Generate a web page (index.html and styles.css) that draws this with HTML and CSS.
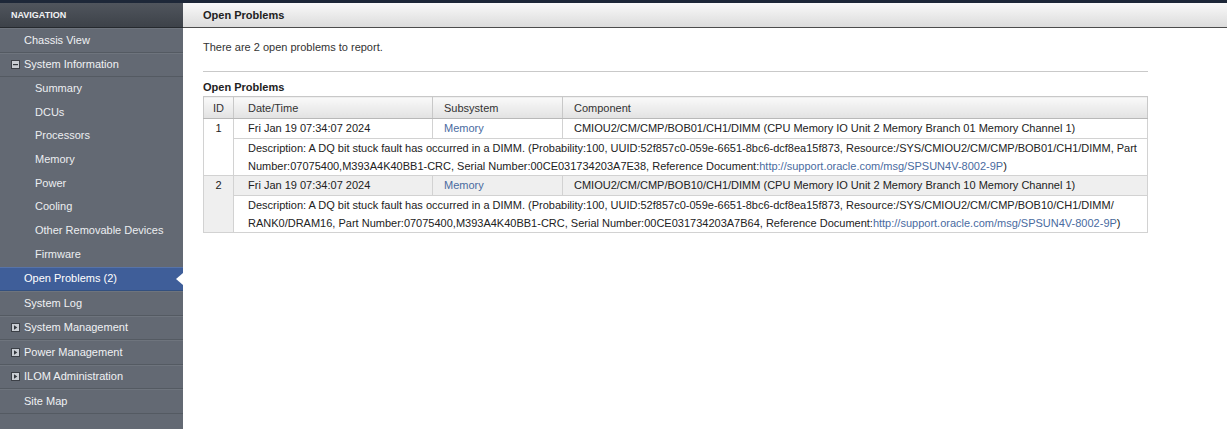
FILE: index.html
```html
<!DOCTYPE html>
<html>
<head>
<meta charset="utf-8">
<title>Open Problems</title>
<link rel="stylesheet" href="styles.css">
</head>
<body>
<div class="top-strip"></div>
<div class="layout">
  <nav class="sidebar">
    <div class="nav-header">NAVIGATION</div>
    <ul class="nav">
      <li class="nav-top"><span class="label">Chassis View</span></li>
      <li class="nav-top">
        <svg class="tog" width="9" height="9" viewBox="0 0 9 9"><rect x="0.5" y="0.5" width="8" height="8" fill="#c9cdd3" stroke="#3c4047"/><rect x="2" y="4" width="5" height="1.2" fill="#33373d"/></svg>
        <span class="label">System Information</span>
      </li>
      <li class="nav-sub">Summary</li>
      <li class="nav-sub">DCUs</li>
      <li class="nav-sub">Processors</li>
      <li class="nav-sub">Memory</li>
      <li class="nav-sub">Power</li>
      <li class="nav-sub">Cooling</li>
      <li class="nav-sub">Other Removable Devices</li>
      <li class="nav-sub">Firmware</li>
      <li class="nav-top selected"><span class="label">Open Problems (2)</span><span class="pointer"></span></li>
      <li class="nav-top"><span class="label">System Log</span></li>
      <li class="nav-top">
        <svg class="tog" width="9" height="9" viewBox="0 0 9 9"><rect x="0.5" y="0.5" width="8" height="8" fill="#c9cdd3" stroke="#3c4047"/><path d="M3 2.2 L6.3 4.5 L3 6.8 Z" fill="#33373d"/></svg>
        <span class="label">System Management</span>
      </li>
      <li class="nav-top">
        <svg class="tog" width="9" height="9" viewBox="0 0 9 9"><rect x="0.5" y="0.5" width="8" height="8" fill="#c9cdd3" stroke="#3c4047"/><path d="M3 2.2 L6.3 4.5 L3 6.8 Z" fill="#33373d"/></svg>
        <span class="label">Power Management</span>
      </li>
      <li class="nav-top">
        <svg class="tog" width="9" height="9" viewBox="0 0 9 9"><rect x="0.5" y="0.5" width="8" height="8" fill="#c9cdd3" stroke="#3c4047"/><path d="M3 2.2 L6.3 4.5 L3 6.8 Z" fill="#33373d"/></svg>
        <span class="label">ILOM Administration</span>
      </li>
      <li class="nav-top"><span class="label">Site Map</span></li>
    </ul>
  </nav>
  <main class="main">
    <div class="page-header">Open Problems</div>
    <div class="content">
      <p class="intro">There are 2 open problems to report.</p>
      <hr class="rule">
      <h2 class="section-title">Open Problems</h2>
      <table class="problems">
        <colgroup>
          <col class="c-id"><col class="c-date"><col class="c-sub"><col class="c-comp">
        </colgroup>
        <thead>
          <tr><th class="id">ID</th><th class="first">Date/Time</th><th>Subsystem</th><th>Component</th></tr>
        </thead>
        <tbody>
          <tr class="data odd">
            <td class="id" rowspan="2">1</td>
            <td class="first">Fri Jan 19 07:34:07 2024</td>
            <td><a class="link">Memory</a></td>
            <td>CMIOU2/CM/CMP/BOB01/CH1/DIMM (CPU Memory IO Unit 2 Memory Branch 01 Memory Channel 1)</td>
          </tr>
          <tr class="desc">
            <td colspan="3">Description: A DQ bit stuck fault has occurred in a DIMM. (Probability:100, UUID:52f857c0-059e-6651-8bc6-dcf8ea15f873, Resource:/SYS/CMIOU2/CM/CMP/BOB01/CH1/DIMM, Part Number:07075400,M393A4K40BB1-CRC, Serial Number:00CE031734203A7E38, Reference Document:<a class="link">http://support.oracle.com/msg/SPSUN4V-8002-9P</a>)</td>
          </tr>
          <tr class="data even">
            <td class="id" rowspan="2">2</td>
            <td class="first">Fri Jan 19 07:34:07 2024</td>
            <td><a class="link">Memory</a></td>
            <td>CMIOU2/CM/CMP/BOB10/CH1/DIMM (CPU Memory IO Unit 2 Memory Branch 10 Memory Channel 1)</td>
          </tr>
          <tr class="desc">
            <td colspan="3">Description: A DQ bit stuck fault has occurred in a DIMM. (Probability:100, UUID:52f857c0-059e-6651-8bc6-dcf8ea15f873, Resource:/SYS/CMIOU2/CM/CMP/BOB10/CH1/DIMM/<wbr>RANK0/DRAM16, Part Number:07075400,M393A4K40BB1-CRC, Serial Number:00CE031734203A7B64, Reference Document:<a class="link">http://support.oracle.com/msg/SPSUN4V-8002-9P</a>)</td>
          </tr>
        </tbody>
      </table>
    </div>
  </main>
</div>
</body>
</html>
```

FILE: styles.css
```css
html, body {
  margin: 0;
  padding: 0;
  height: 100%;
}
body {
  font-family: "Liberation Sans", Arial, sans-serif;
  font-size: 11px;
  color: #333;
  background: #fff;
  display: flex;
  flex-direction: column;
  overflow: hidden;
}
.top-strip {
  height: 3px;
  background: #1d2738;
  flex: none;
}
.layout {
  flex: 1;
  display: flex;
  min-height: 0;
}
.sidebar {
  width: 183px;
  flex: none;
  background: #636973;
  display: flex;
  flex-direction: column;
}
.nav-header {
  height: 24px;
  line-height: 24px;
  padding-left: 11px;
  font-size: 9px;
  font-weight: bold;
  color: #f2f3f5;
  background: linear-gradient(#50555d, #3d4249);
  border-bottom: 1px solid #25292e;
}
.nav {
  list-style: none;
  margin: 0;
  padding: 0;
}
.nav-top {
  height: 23.5px;
  display: flex;
  align-items: center;
  position: relative;
  color: #f0f1f3;
  border-bottom: 1px solid #545a62;
  box-shadow: inset 0 1px 0 #6e747d;
  padding-left: 24px;
}
.nav-top .tog {
  position: absolute;
  left: 11px;
  top: 7.5px;
}
.nav-sub {
  height: 23.7px;
  line-height: 23.7px;
  padding-left: 35px;
  color: #eceef1;
  background: #636973;
}
.nav-top.selected {
  background: #3f5e99;
  color: #fff;
  border-bottom: 1px solid #33507f;
  box-shadow: inset 0 1px 0 #5773a8;
}
.pointer {
  position: absolute;
  right: 0;
  top: 6px;
  width: 0;
  height: 0;
  border-top: 6px solid transparent;
  border-bottom: 6px solid transparent;
  border-right: 7px solid #fff;
}
.main {
  flex: 1;
  min-width: 0;
}
.page-header {
  height: 24px;
  line-height: 24px;
  padding-left: 20px;
  font-weight: bold;
  color: #222;
  background: linear-gradient(#f9f9f9, #dcdcdc);
  border-bottom: 1px solid #4c4c4c;
}
.content {
  padding: 0 20px;
}
.intro {
  margin: 12px 0 0;
  line-height: 15px;
}
.rule {
  width: 945px;
  margin: 16px 0 0;
  border: 0;
  height: 1px;
  background: #c9c9c9;
}
.section-title {
  margin: 8px 0 0;
  font-size: 11px;
  line-height: 15px;
  font-weight: bold;
  color: #222;
}
.problems {
  margin-top: 1px;
  width: 945px;
  border-collapse: collapse;
  border: 1px solid #b3b3b3;
  table-layout: fixed;
}
.c-id { width: 30px; }
.c-date { width: 199px; }
.c-sub { width: 130px; }
.problems th {
  height: 21px;
  padding: 0 0 0 11px;
  text-align: left;
  font-weight: normal;
  color: #333;
  background: linear-gradient(#f9f9f9, #e2e2e2);
  border: 1px solid #c8c8c8;
  border-bottom-color: #b8b8b8;
}
.problems th.id,
.problems td.id {
  text-align: center;
  padding: 0;
}
.problems td {
  padding: 0 0 0 11px;
  border: 1px solid #d2d2d2;
  color: #222;
  vertical-align: middle;
}
.problems th.first,
.problems td.first {
  padding-left: 14px;
}
.problems td.id {
  vertical-align: top;
  line-height: 19px;
}
.data td {
  height: 19px;
  line-height: 19px;
}
.data.even td {
  background: #efefef;
}
.problems .desc td {
  line-height: 18px;
  padding: 0 6px 0 14px;
}
.link {
  color: #4a6b9f;
  text-decoration: none;
}
```
